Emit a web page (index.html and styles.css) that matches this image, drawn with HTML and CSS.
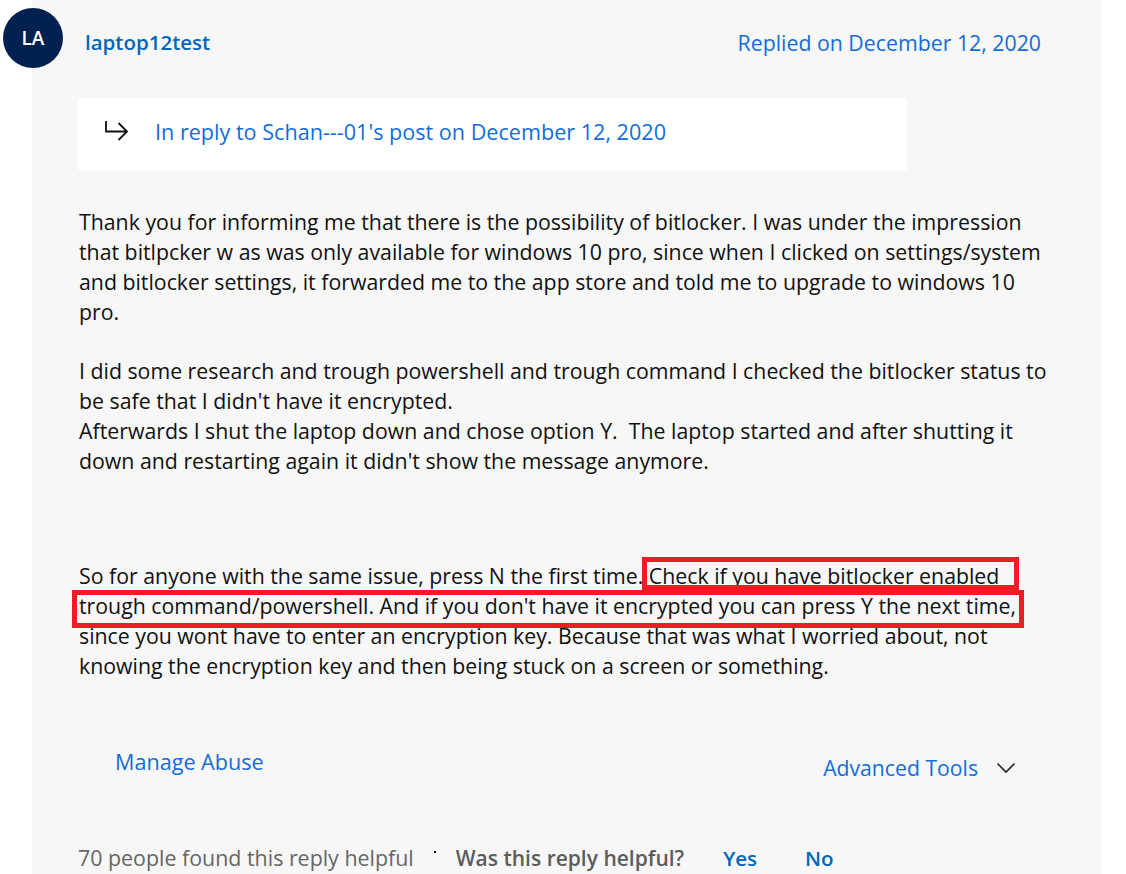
FILE: index.html
```html
<!DOCTYPE html>
<html lang="en">
<head>
<meta charset="utf-8">
<title>Reply</title>
<link rel="stylesheet" href="styles.css">
</head>
<body>
<main class="panel">
  <header class="head">
    <div class="avatar">LA</div>
    <a class="author">laptop12test</a>
    <a class="date">Replied on December 12, 2020</a>
  </header>
  <div class="reply-to">
    <svg class="reply-icon" width="26" height="22" viewBox="0 0 26 22" fill="none" stroke="#111" stroke-width="1.800"><path d="M2 1v10.500h21M14.500 3l8.500 8.500-8.500 8.500"/></svg>
    <a class="reply-link">In reply to Schan---01's post on December 12, 2020</a>
  </div>
  <article class="body">
    <p>Thank you for informing me that there is the possibility of bitlocker. I was under the impression<br>that bitlpcker w as was only available for windows 10 pro, since when I clicked on settings/system<br>and bitlocker settings, it forwarded me to the app store and told me to upgrade to windows 10<br>pro.</p>
    <p>I did some research and trough powershell and trough command I checked the bitlocker status to<br>be safe that I didn't have it encrypted.<br>Afterwards I shut the laptop down and chose option Y.&nbsp; The laptop started and after shutting it<br>down and restarting again it didn't show the message anymore.</p>
    <p class="last">So for anyone with the same issue, press N the first time. Check if you have bitlocker enabled<br>trough command/powershell. And if you don't have it encrypted you can press Y the next time,<br>since you wont have to enter an encryption key. Because that was what I worried about, not<br>knowing the encryption key and then being stuck on a screen or something.</p>
    <div class="mark mark-one"></div>
    <div class="mark mark-two"></div>
  </article>
  <div class="tools">
    <a class="abuse">Manage Abuse</a>
    <a class="advanced">Advanced Tools
      <svg class="chev" width="20" height="12" viewBox="0 0 20 12" fill="none" stroke="#222" stroke-width="1.600"><path d="M1.500 1.500l8.500 8.500 8.500-8.500"/></svg>
    </a>
  </div>
  <footer class="foot">
    <span class="count">70 people found this reply helpful</span>
    <span class="dot"></span>
    <strong class="ask">Was this reply helpful?</strong>
    <a class="vote yes">Yes</a>
    <a class="vote">No</a>
  </footer>
</main>
</body>
</html>
```
FILE: styles.css
```css
* { box-sizing: border-box; }
html, body { margin: 0; padding: 0; height: 874px; overflow: hidden; background: #fff; }
body { font-family: "Open Sans", "Noto Sans", sans-serif; color: #111; font-size: 21.3px; }
.panel { margin-left: 32px; width: 1069px; height: 874px; background: #f7f7f7; box-shadow: 0 0 3px #f7f7f7; padding-top: 8px; }
.head { display: flex; align-items: center; margin-left: -29px; height: 60px; white-space: nowrap; }
.avatar { width: 60px; height: 60px; border-radius: 50%; background: #002050; color: #fff; font-weight: 600; font-size: 19px; display: flex; align-items: center; justify-content: center; flex: none; }
.author { margin: 8px 0 0 22px; color: #0067b8; font-weight: 600; font-size: 20.5px; }
.date { margin: 8px 60px 0 auto; color: #146cd9; font-size: 21.3px; }
.reply-to { margin: 30px 0 0 46px; width: 829px; height: 72px; background: #fff; display: flex; align-items: flex-start; padding: 22px 0 0 26px; }
.reply-icon { flex: none; }
.reply-link { margin: -3px 0 0 25px; color: #146cd9; line-height: 30px; font-size: 21.6px; }
.body { position: relative; margin: 37px 0 0 47px; line-height: 30px; white-space: nowrap; }
.body p { margin: 0 0 29px; }
.body p.last { margin: 85px 0 0; }
.mark { position: absolute; border: 5px solid #ee1c25; }
.mark-one { left: 563px; top: 350px; width: 377px; height: 33px; }
.mark-two { left: -7px; top: 383px; width: 952px; height: 38px; }
.tools { display: flex; justify-content: space-between; align-items: flex-start; margin: 66px 0 0 83px; padding-right: 85px; }
.abuse, .advanced { color: #146cd9; line-height: 30px; }
.abuse { font-size: 21.6px; }
.advanced { display: flex; align-items: center; margin-top: 6px; font-size: 21.2px; }
.chev { margin-left: 18px; }
.foot { display: flex; align-items: center; margin: 60px 0 0 46px; color: #666; line-height: 30px; white-space: nowrap; }
.count { font-size: 21.4px; }
.dot { width: 2px; height: 2px; background: #111; margin: 0 20px 12px 20px; }
.ask { font-weight: 600; color: #5c5c5c; font-size: 21px; }
.vote { color: #0067b8; font-weight: 600; font-size: 20.5px; margin-left: 48px; }
.vote.yes { margin-left: 39px; }
```
